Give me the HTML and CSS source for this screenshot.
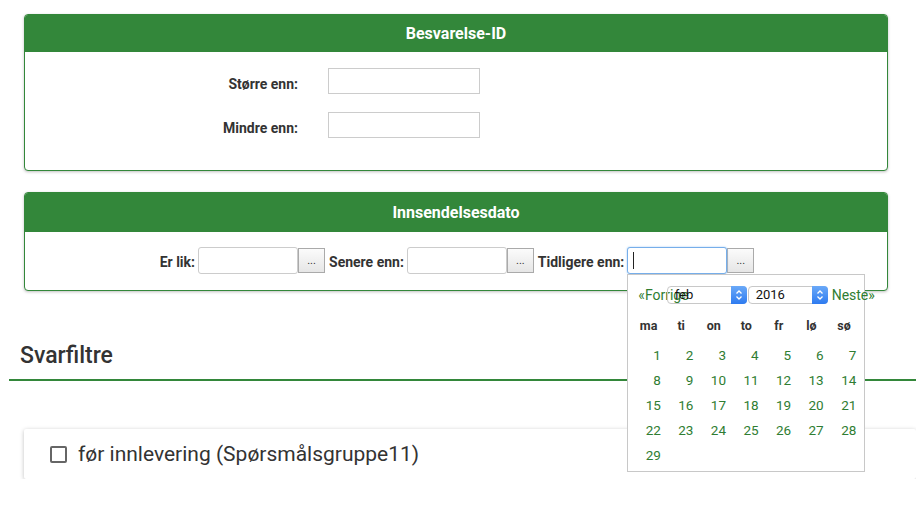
FILE: index.html
```html
<!DOCTYPE html>
<html lang="no">
<head>
    <meta charset="UTF-8">
    <meta name="viewport" content="width=device-width, initial-scale=1.0">
    <title>Svarfiltre</title>
    <link rel="stylesheet" href="styles.css">
</head>
<body>
    <div class="panel">
        <div class="panel-heading">Besvarelse-ID</div>
        <div class="panel-body">
            <div class="id-form">
                <label class="field-label">Større enn:</label>
                <input type="text" class="id-input">
                <label class="field-label">Mindre enn:</label>
                <input type="text" class="id-input">
            </div>
        </div>
    </div>

    <div class="panel panel-date">
        <div class="panel-heading">Innsendelsesdato</div>
        <div class="panel-body date-body">
            <div class="date-row">
                <label class="field-label">Er lik:</label>
                <span class="date-wrap"><input type="text" class="date-input"></span>
                <button class="date-btn">...</button>
                <label class="field-label">Senere enn:</label>
                <span class="date-wrap"><input type="text" class="date-input"></span>
                <button class="date-btn">...</button>
                <label class="field-label">Tidligere enn:</label>
                <span class="date-wrap date-wrap-active">
                    <input type="text" class="date-input focused">
                    <!-- Kalender-popup -->
                    <div class="calendar">
                        <div class="cal-head">
                            <a class="cal-nav">«Forrige</a>
                            <span class="fake-select month-select">feb<span class="sel-arrows"><svg width="8" height="12" viewBox="0 0 8 12"><path d="M1.5 4.5 L4 2 L6.5 4.5 M1.5 7.5 L4 10 L6.5 7.5" fill="none" stroke="#fff" stroke-width="1.3"/></svg></span></span>
                            <span class="fake-select year-select">2016<span class="sel-arrows"><svg width="8" height="12" viewBox="0 0 8 12"><path d="M1.5 4.5 L4 2 L6.5 4.5 M1.5 7.5 L4 10 L6.5 7.5" fill="none" stroke="#fff" stroke-width="1.3"/></svg></span></span>
                            <a class="cal-nav cal-next">Neste»</a>
                        </div>
                        <table class="cal-table">
                            <thead>
                                <tr><th>ma</th><th>ti</th><th>on</th><th>to</th><th>fr</th><th>lø</th><th>sø</th></tr>
                            </thead>
                            <tbody>
                                <tr><td>1</td><td>2</td><td>3</td><td>4</td><td>5</td><td>6</td><td>7</td></tr>
                                <tr><td>8</td><td>9</td><td>10</td><td>11</td><td>12</td><td>13</td><td>14</td></tr>
                                <tr><td>15</td><td>16</td><td>17</td><td>18</td><td>19</td><td>20</td><td>21</td></tr>
                                <tr><td>22</td><td>23</td><td>24</td><td>25</td><td>26</td><td>27</td><td>28</td></tr>
                                <tr><td>29</td><td></td><td></td><td></td><td></td><td></td><td></td></tr>
                            </tbody>
                        </table>
                    </div>
                </span>
                <button class="date-btn">...</button>
            </div>
        </div>
    </div>

    <div class="section-header">
        <h2>Svarfiltre</h2>
    </div>

    <div class="filter-card">
        <label class="filter-item"><span class="checkbox"></span>før innlevering (Spørsmålsgruppe11)</label>
    </div>
</body>
</html>
```

FILE: styles.css
```css
body {
    font-family: Roboto, "Liberation Sans", sans-serif;
    margin: 0;
    padding: 0;
    color: #333;
    background: #fff;
    overflow: hidden;
}
.panel {
    margin: 14px 28px 0 24px;
    border: 1px solid #33873a;
    border-radius: 4px;
    box-shadow: 0 1px 3px rgba(0, 0, 0, 0.25);
    background: #fff;
}
.panel-heading {
    background-color: #33873a;
    color: #fff;
    font-weight: bold;
    font-size: 16px;
    text-align: center;
    height: 37px;
    line-height: 37px;
    border-radius: 3px 3px 0 0;
}
.panel-body {
    padding: 16px 0 32px;
}
.id-form {
    display: grid;
    grid-template-columns: 100px 152px;
    column-gap: 30px;
    row-gap: 18px;
    margin-left: 173px;
    align-items: center;
}
.field-label {
    font-weight: bold;
    font-size: 14px;
    color: #333;
    text-align: right;
    white-space: nowrap;
}
.id-form .field-label {
    padding-top: 6px;
}
.id-input {
    height: 26px;
    box-sizing: border-box;
    border: 1px solid #ccc;
    margin: 0;
    padding: 0 5px;
}
.panel-date {
    margin-top: 21px;
}
.panel-date .panel-heading {
    height: 39px;
    line-height: 39px;
}
.date-body {
    padding: 15px 0 16px;
}
.date-row {
    display: flex;
    justify-content: center;
    align-items: center;
    padding-left: 6px;
}
.date-row .field-label {
    margin-right: 3px;
    padding-top: 2px;
}
.date-wrap {
    position: relative;
    display: block;
}
.date-input {
    display: block;
    width: 100px;
    height: 27px;
    box-sizing: border-box;
    border: 1px solid #ccc;
    border-radius: 3px;
    margin: 0;
    padding: 0 5px;
}
.date-input.focused {
    border-color: #76aeea;
    box-shadow: 0 0 2px #9cc6f2;
    outline: none;
}
/* Markør i aktivt felt */
.date-wrap-active::before {
    content: "";
    position: absolute;
    left: 6px;
    top: 5px;
    width: 1px;
    height: 17px;
    background: #222;
    z-index: 2;
}
.date-btn {
    width: 27px;
    height: 25px;
    margin: 0 4px 0 0;
    padding: 0;
    border: 1px solid #aaa;
    border-radius: 0;
    background: linear-gradient(#fbfbfb, #e6e6e6);
    font-size: 11px;
    color: #333;
    font-family: Roboto, "Liberation Sans", sans-serif;
}
.calendar {
    position: absolute;
    top: 100%;
    left: 0;
    width: 236px;
    height: 196px;
    border: 1px solid #c8c8c8;
    background: #fff;
    z-index: 10;
    padding: 0;
}
.cal-head {
    display: flex;
    align-items: center;
    height: 18px;
    margin: 11px 0 9px;
    padding-left: 10px;
    white-space: nowrap;
}
.cal-nav {
    color: #2f7d32;
    font-size: 14px;
}
.fake-select {
    position: relative;
    display: block;
    flex: none;
    width: 80px;
    height: 18px;
    box-sizing: border-box;
    border: 1px solid #c8c8c8;
    border-radius: 4px;
    font-size: 13px;
    line-height: 16px;
    color: #111;
    padding-left: 7px;
    background: transparent;
}
.month-select {
    margin-left: -22px;
}
.year-select {
    margin-left: 1px;
    background: #fff;
}
.sel-arrows {
    position: absolute;
    right: -1px;
    top: -1px;
    width: 16px;
    height: 18px;
    border-radius: 0 4px 4px 0;
    background: linear-gradient(#6aa9f8, #2e7bf0);
    display: flex;
    align-items: center;
    justify-content: center;
}
.cal-next {
    margin-left: 4px;
}
.cal-table {
    border-collapse: collapse;
    margin-left: 4px;
    width: 228px;
    table-layout: fixed;
}
.cal-table th {
    height: 25px;
    padding: 0;
    font-size: 12.5px;
    font-weight: bold;
    color: #333;
    text-align: center;
}
.cal-table thead tr {
    border-bottom: 4px solid transparent;
}
.cal-table td {
    height: 25px;
    padding: 0 4px 0 0;
    font-size: 13.5px;
    color: #2f7d32;
    text-align: right;
}
.section-header {
    margin: 53px 0 0 9px;
    padding: 0 11px 11px;
    border-bottom: 2px solid #33873a;
}
.section-header h2 {
    margin: 0;
    font-size: 23px;
    line-height: 24px;
    font-weight: 500;
    color: #333;
}
.filter-card {
    margin: 48px 0 0 24px;
    height: 50px;
    padding-left: 26px;
    display: flex;
    align-items: center;
    box-shadow: 0 1px 4px rgba(0, 0, 0, 0.25);
    border-radius: 2px;
}
.filter-item {
    display: flex;
    align-items: center;
    font-size: 21px;
    color: #333;
}
.checkbox {
    width: 17px;
    height: 17px;
    box-sizing: border-box;
    border: 2px solid #666;
    border-radius: 2px;
    margin-right: 11px;
}
```
